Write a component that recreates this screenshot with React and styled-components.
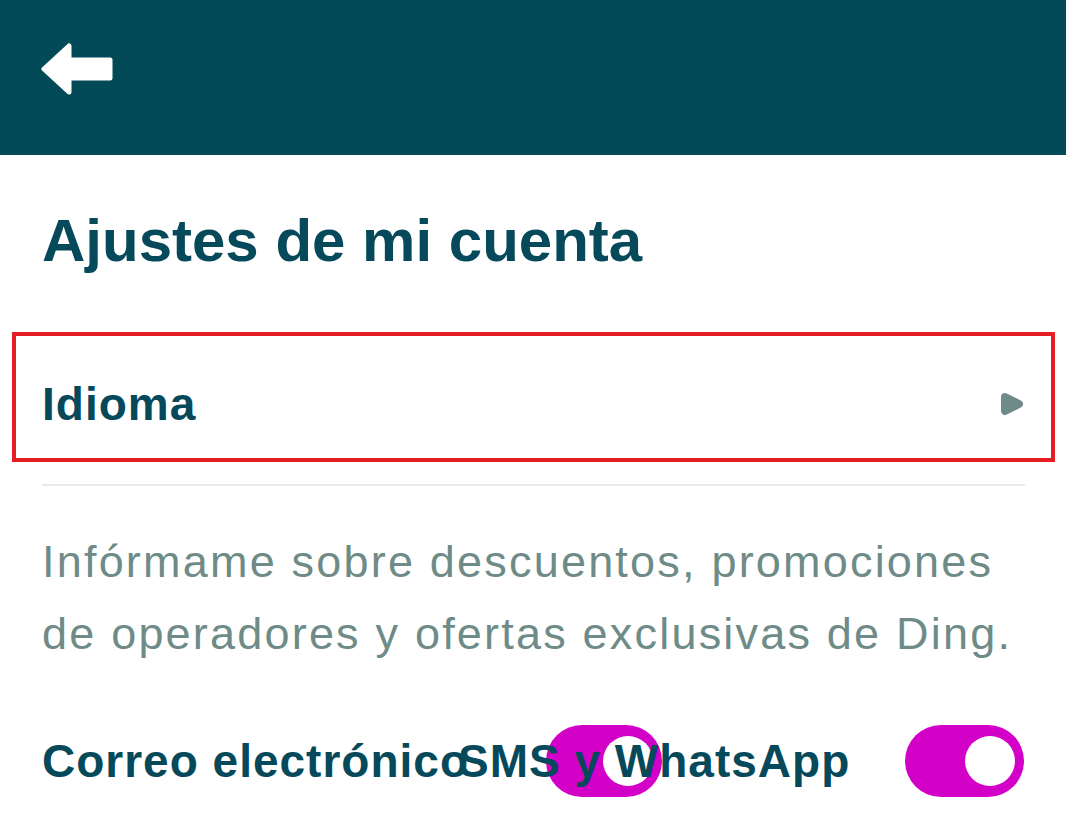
import React from 'react'
import styled, { createGlobalStyle } from 'styled-components'

const GlobalStyle = createGlobalStyle`
  html, body {
    margin: 0;
    padding: 0;
    background: #fff;
    font-family: "Liberation Sans", Arial, sans-serif;
  }
`

const Page = styled.div`
  width: 1066px;
  min-height: 835px;
  background: #fff;
  overflow: hidden;
`

const Header = styled.header`
  height: 155px;
  box-sizing: border-box;
  background: #034a59;
  display: flex;
  align-items: flex-start;
  padding: 43px 0 0 41px;
`

const BackButton = styled.button`
  border: 0;
  padding: 0;
  background: none;
  display: flex;
  cursor: pointer;
`

const Content = styled.main`
  padding: 50px 41px 0 42px;
  display: flex;
  flex-direction: column;
`

const Title = styled.h1`
  margin: 0;
  font-size: 60px;
  line-height: 72px;
  font-weight: 700;
  color: #06495a;
`

const LinkRow = styled.div`
  margin: 55px -30px 0 -30px;
  border: 4px solid #e41e25;
  height: 130px;
  box-sizing: border-box;
  display: flex;
  align-items: center;
  justify-content: space-between;
  padding: 14px 27px 0 26px;
`

const RowLabel = styled.span`
  font-size: 46px;
  line-height: 56px;
  font-weight: 700;
  letter-spacing: 1px;
  color: #06495a;
`

const Divider = styled.hr`
  margin: 22px 0 0 0;
  border: 0;
  height: 2px;
  background: #e8e9e9;
`

const Info = styled.p`
  margin: 40px 0 0 0;
  font-size: 45px;
  line-height: 72px;
  letter-spacing: 2.2px;
  color: #6e8b88;
`

const ToggleRow = styled.div`
  margin-top: 55px;
  display: grid;
  grid-template-columns: 416px 88px 116px 243px 120px;
  align-items: center;
  height: 72px;
`

const ToggleLabel = styled.span`
  grid-row: 1;
  grid-column: ${p => p.$col};
  white-space: nowrap;
  font-size: 46px;
  line-height: 56px;
  font-weight: 700;
  letter-spacing: 1px;
  color: #06495a;
`

const Switch = styled.div`
  grid-row: 1;
  grid-column: ${p => p.$col};
  justify-self: start;
  width: ${p => p.$w}px;
  height: 72px;
  border-radius: 36px;
  background: #d300c8;
  display: flex;
  align-items: center;
  justify-content: flex-end;
  padding-right: 9px;
  box-sizing: border-box;
`

const Knob = styled.div`
  width: 50px;
  height: 50px;
  border-radius: 50%;
  background: #fff;
`

const BackArrow = () => (
  <svg width="72" height="52" viewBox="0 0 72 52">
    <polygon
      points="3,26 28,3 28,17 69,17 69,35 28,35 28,49"
      fill="#fff"
      stroke="#fff"
      strokeWidth="5"
      strokeLinejoin="round"
    />
  </svg>
)

const Chevron = () => (
  <svg width="24" height="24" viewBox="0 0 24 24">
    <polygon
      points="5,5 19,12 5,19"
      fill="#6e8b88"
      stroke="#6e8b88"
      strokeWidth="8"
      strokeLinejoin="round"
    />
  </svg>
)

const App = () => {
  return (
    <Page>
      <GlobalStyle />
      <Header>
        <BackButton aria-label="Volver">
          <BackArrow />
        </BackButton>
      </Header>
      <Content>
        <Title>Ajustes de mi cuenta</Title>
        <LinkRow>
          <RowLabel>Idioma</RowLabel>
          <Chevron />
        </LinkRow>
        <Divider />
        <Info>
          Infórmame sobre descuentos, promociones de operadores y ofertas exclusivas de Ding.
        </Info>
        <ToggleRow>
          <ToggleLabel $col="1">Correo electrónico</ToggleLabel>
          <Switch $col="3" $w={116}><Knob /></Switch>
          <ToggleLabel $col="2 / 5">SMS y WhatsApp</ToggleLabel>
          <Switch $col="5" $w={119}><Knob /></Switch>
        </ToggleRow>
      </Content>
    </Page>
  )
}

export default App
